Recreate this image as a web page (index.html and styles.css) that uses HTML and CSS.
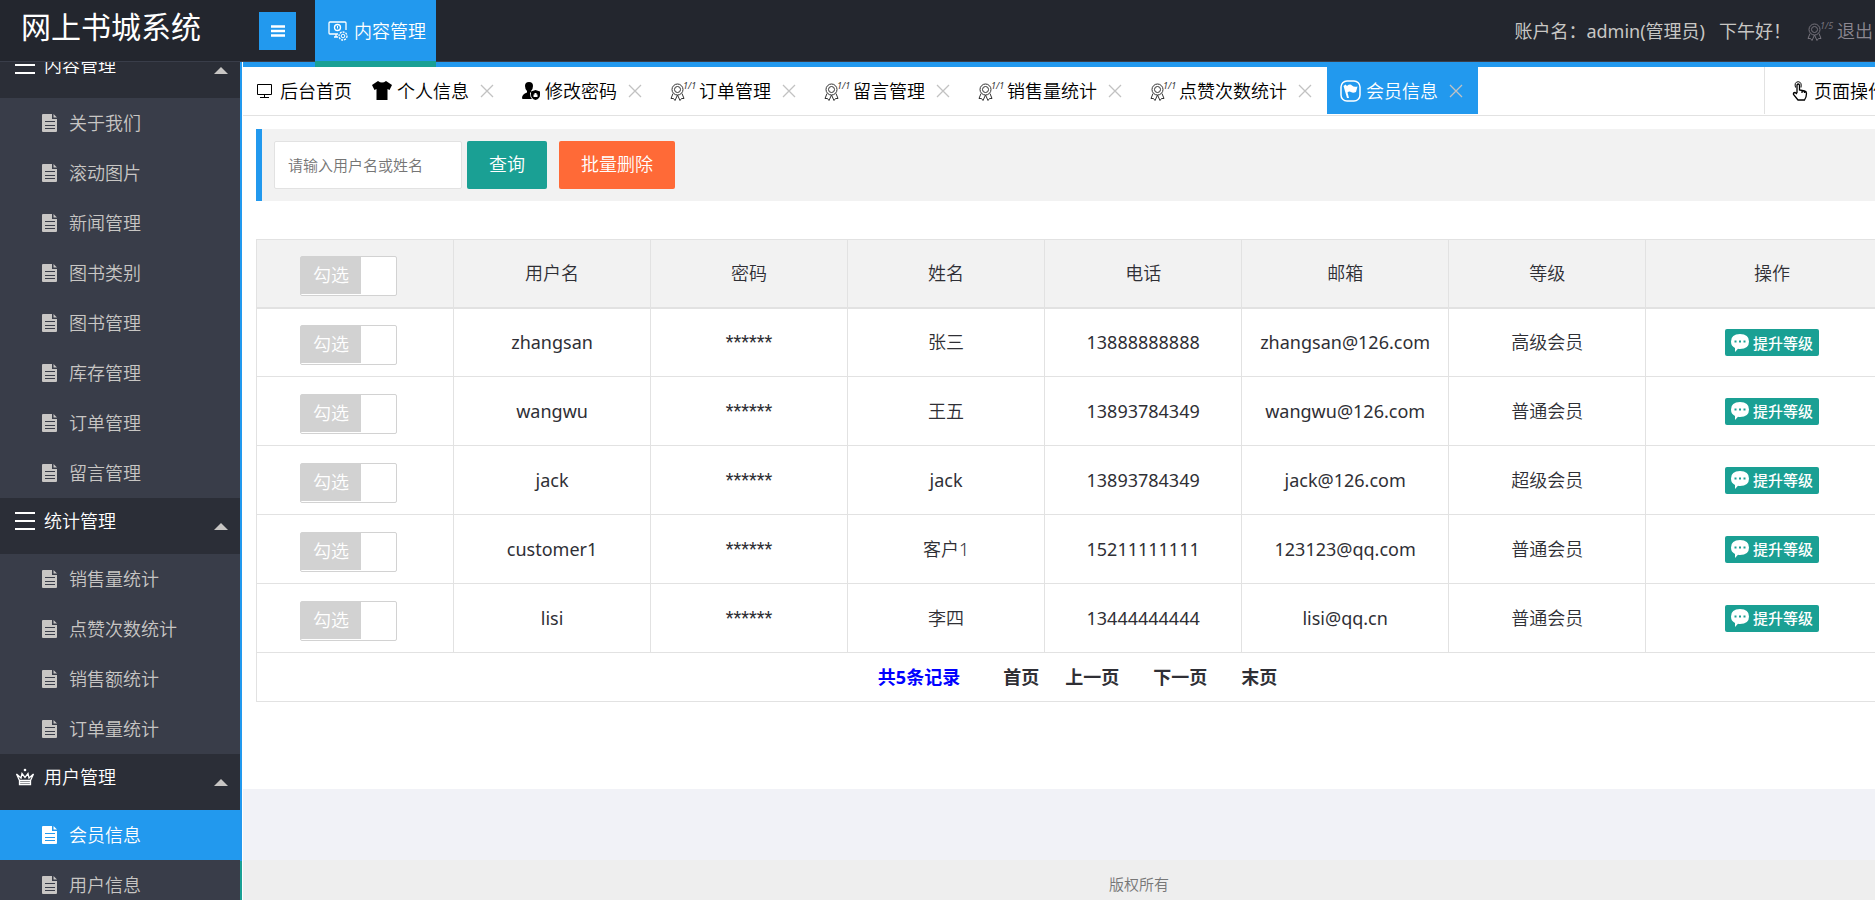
FILE: index.html
```html
<!DOCTYPE html>
<html lang="zh-CN">
<head>
    <meta charset="UTF-8">
    <meta name="viewport" content="width=device-width, initial-scale=1.0">
    <title>网上书城系统</title>
    <link rel="stylesheet" href="styles.css">
</head>
<body>
    <!-- SVG icon set -->
    <svg class="sprite" xmlns="http://www.w3.org/2000/svg">
        <symbol id="i-file" viewBox="0 0 16 18">
            <path fill="currentColor" fill-rule="evenodd" d="M1 0H10V5H15V17Q15 18 14 18H1Q0 18 0 17V1Q0 0 1 0ZM3 7V8H13V7ZM3 11V12H13V11ZM3 14V15H13V14Z" />
            <path fill="currentColor" d="M11.500 0L15 3.500H11.500Z" />
        </symbol>
        <symbol id="i-menu" viewBox="0 0 20 18">
            <path stroke="currentColor" stroke-width="2" d="M0 1H20M0 9H20M0 17H20" />
        </symbol>
        <symbol id="i-crown" viewBox="0 0 20 18">
            <path fill="none" stroke="currentColor" stroke-width="1.300" d="M4.500 12.500L1.500 6L6 10L7 5.500L10 9.500L13 5.500L14 10L18.500 6L15.500 12.500M4.500 12.500V16.500H15.500V12.500ZM4.500 14.500H15.500" />
            <circle fill="currentColor" cx="10" cy="2" r="1.300" />
        </symbol>
        <symbol id="i-bars" viewBox="0 0 14 12">
            <path stroke="currentColor" stroke-width="2.500" d="M0 1.500H14M0 6H14M0 10.500H14" />
        </symbol>
        <symbol id="i-board" viewBox="0 0 20 20">
            <path fill="none" stroke="currentColor" stroke-width="1.300" d="M10 13H2Q1 13 1 12V2Q1 1 2 1H17Q18 1 18 2V9M6 16H10M8 13V16" />
            <circle fill="none" stroke="currentColor" stroke-width="1.300" cx="9.500" cy="6.500" r="3" />
            <path stroke="currentColor" d="M9.500 5V7.500" />
            <circle fill="none" stroke="currentColor" stroke-width="1.300" stroke-dasharray="2 1" cx="15" cy="15" r="4" />
            <circle fill="none" stroke="currentColor" cx="15" cy="15" r="1.800" />
        </symbol>
        <symbol id="i-screen" viewBox="0 0 17 17">
            <path fill="none" stroke="currentColor" d="M1.500 2.500H15.500V12.500H1.500ZM8.500 12.500V15.500M4 15.500H13" />
        </symbol>
        <symbol id="i-shirt" viewBox="0 0 20 19">
            <path fill="currentColor" d="M6 0Q10 3 14 0L20 4L17.500 9L15.500 8V19H4.500V8L2.500 9L0 4Z" />
        </symbol>
        <symbol id="i-user" viewBox="0 0 18 18">
            <path fill="currentColor" d="M7 0Q11 0 11 4Q11 7 9 9V10L8 11Q8 15 10 17H1Q0 17 0 16Q0 12 5 10.500V9Q3 7 3 4Q3 0 7 0Z" />
            <path fill="currentColor" fill-rule="evenodd" d="M9 9.500L13.500 8L18 9.500V13Q18 16.500 13.500 18Q9 16.500 9 13ZM12.500 11H14.500V12.500H15.500V15H11.500V12.500H12.500Z" />
        </symbol>
        <symbol id="i-medal" viewBox="0 0 15 18">
            <g fill="none" stroke="currentColor">
                <circle cx="7.500" cy="6.500" r="5.500" />
                <circle cx="7.500" cy="6.500" r="3" />
                <path d="M3 10.500L1 15.500H3.500L5 17.500L7.500 12L10 17.500L11.500 15.500H14L12 10.500" />
            </g>
        </symbol>
        <symbol id="i-flag" viewBox="0 0 21 22">
            <rect fill="none" stroke="currentColor" stroke-width="1.500" x="1" y="1" width="19" height="20" rx="6" />
            <path fill="currentColor" d="M3.500 6L5.500 4.500L7 6Q10 3.500 12 5.500Q14 7.500 17.500 6.500L16 12Q13 13.500 11 12Q9 11 7.500 12.500L9 18H7Z" />
        </symbol>
        <symbol id="i-close" viewBox="0 0 14 14">
            <path stroke="currentColor" stroke-width="1.300" d="M1 1L13 13M13 1L1 13" />
        </symbol>
        <symbol id="i-hand" viewBox="0 0 16 20">
            <path fill="none" stroke="currentColor" stroke-width="1.300" d="M5 12V4.500Q5 3 6.200 3T7.500 4.500V9L12.500 10Q14.500 10.500 14.500 12.500Q14.500 16 12.500 19H6L1.500 13.500Q1 11.500 3 11.500L5 13M10 9.500V12M12.500 10V12" />
            <path fill="none" stroke="currentColor" d="M3.500 6.500Q2 1 6.200 .700Q10 1 9 6.500" />
        </symbol>
        <symbol id="i-chat" viewBox="0 0 18 18">
            <path fill="currentColor" fill-rule="evenodd" d="M9 0Q18 0 18 7.500T9 15Q8 15 7 14.800L4 18L4 14Q0 12 0 7.500Q0 0 9 0ZM3.500 6.500V8.500H5.500V6.500ZM8 6.500V8.500H10V6.500ZM12.500 6.500V8.500H14.500V6.500Z" />
        </symbol>
    </svg>

    <header class="header">
        <h1 class="logo">网上书城系统</h1>
        <button class="toggle-side" type="button" aria-label="菜单"><svg width="14" height="12"><use href="#i-bars" /></svg></button>
        <a class="top-nav" href="#"><svg width="20" height="20"><use href="#i-board" /></svg>内容管理</a>
        <div class="account">
            <span>账户名：admin(管理员)</span>
            <span>下午好！</span>
            <a class="logout" href="#"><span class="medal"><svg width="15" height="18"><use href="#i-medal" /></svg><i>1/5</i></span>退出</a>
        </div>
    </header>

    <div class="layout">
        <nav class="side">
            <div class="menu">
                <a class="group" href="#"><svg width="20" height="18"><use href="#i-menu" /></svg><span>内容管理</span></a>
                <a class="item" href="#"><svg width="16" height="18"><use href="#i-file" /></svg>关于我们</a>
                <a class="item" href="#"><svg width="16" height="18"><use href="#i-file" /></svg>滚动图片</a>
                <a class="item" href="#"><svg width="16" height="18"><use href="#i-file" /></svg>新闻管理</a>
                <a class="item" href="#"><svg width="16" height="18"><use href="#i-file" /></svg>图书类别</a>
                <a class="item" href="#"><svg width="16" height="18"><use href="#i-file" /></svg>图书管理</a>
                <a class="item" href="#"><svg width="16" height="18"><use href="#i-file" /></svg>库存管理</a>
                <a class="item" href="#"><svg width="16" height="18"><use href="#i-file" /></svg>订单管理</a>
                <a class="item" href="#"><svg width="16" height="18"><use href="#i-file" /></svg>留言管理</a>
                <a class="group" href="#"><svg width="20" height="18"><use href="#i-menu" /></svg><span>统计管理</span></a>
                <a class="item" href="#"><svg width="16" height="18"><use href="#i-file" /></svg>销售量统计</a>
                <a class="item" href="#"><svg width="16" height="18"><use href="#i-file" /></svg>点赞次数统计</a>
                <a class="item" href="#"><svg width="16" height="18"><use href="#i-file" /></svg>销售额统计</a>
                <a class="item" href="#"><svg width="16" height="18"><use href="#i-file" /></svg>订单量统计</a>
                <a class="group" href="#"><svg width="20" height="18"><use href="#i-crown" /></svg><span>用户管理</span></a>
                <a class="item active" href="#"><svg width="16" height="18"><use href="#i-file" /></svg>会员信息</a>
                <a class="item" href="#"><svg width="16" height="18"><use href="#i-file" /></svg>用户信息</a>
            </div>
        </nav>

        <main class="body">
            <div class="tabs">
                <a class="tab home" href="#"><svg width="17" height="17"><use href="#i-screen" /></svg>后台首页</a>
                <a class="tab" href="#"><svg width="20" height="19"><use href="#i-shirt" /></svg>个人信息<svg class="close" width="14" height="14"><use href="#i-close" /></svg></a>
                <a class="tab" href="#"><svg width="18" height="18"><use href="#i-user" /></svg>修改密码<svg class="close" width="14" height="14"><use href="#i-close" /></svg></a>
                <a class="tab" href="#"><span class="medal"><svg width="15" height="18"><use href="#i-medal" /></svg><i>1/1</i></span>订单管理<svg class="close" width="14" height="14"><use href="#i-close" /></svg></a>
                <a class="tab" href="#"><span class="medal"><svg width="15" height="18"><use href="#i-medal" /></svg><i>1/1</i></span>留言管理<svg class="close" width="14" height="14"><use href="#i-close" /></svg></a>
                <a class="tab" href="#"><span class="medal"><svg width="15" height="18"><use href="#i-medal" /></svg><i>1/1</i></span>销售量统计<svg class="close" width="14" height="14"><use href="#i-close" /></svg></a>
                <a class="tab" href="#"><span class="medal"><svg width="15" height="18"><use href="#i-medal" /></svg><i>1/1</i></span>点赞次数统计<svg class="close" width="14" height="14"><use href="#i-close" /></svg></a>
                <a class="tab current" href="#"><svg width="21" height="22"><use href="#i-flag" /></svg>会员信息<svg class="close" width="14" height="14"><use href="#i-close" /></svg></a>
                <a class="page-ops" href="#"><svg width="16" height="20"><use href="#i-hand" /></svg>页面操作</a>
            </div>

            <div class="page">
                <form class="search">
                    <input class="keyword" type="text" placeholder="请输入用户名或姓名" aria-label="用户名或姓名">
                    <button class="btn" type="button">查询</button>
                    <button class="btn danger" type="button">批量删除</button>
                </form>

                <table class="list">
                    <colgroup>
                        <col span="5" class="col"><col class="col-mail"><col class="col"><col>
                    </colgroup>
                    <thead>
                        <tr>
                            <th><label class="pick"><span>勾选</span><input type="checkbox"></label></th>
                            <th>用户名</th><th>密码</th><th>姓名</th><th>电话</th><th>邮箱</th><th>等级</th><th>操作</th>
                        </tr>
                    </thead>
                    <tbody>
                        <tr>
                            <td><label class="pick"><span>勾选</span><input type="checkbox"></label></td>
                            <td class="en">zhangsan</td><td class="pwd">******</td><td>张三</td><td class="en">13888888888</td><td class="en">zhangsan@126.com</td><td>高级会员</td>
                            <td><button class="upgrade" type="button"><svg width="18" height="18"><use href="#i-chat" /></svg>提升等级</button></td>
                        </tr>
                        <tr>
                            <td><label class="pick"><span>勾选</span><input type="checkbox"></label></td>
                            <td class="en">wangwu</td><td class="pwd">******</td><td>王五</td><td class="en">13893784349</td><td class="en">wangwu@126.com</td><td>普通会员</td>
                            <td><button class="upgrade" type="button"><svg width="18" height="18"><use href="#i-chat" /></svg>提升等级</button></td>
                        </tr>
                        <tr>
                            <td><label class="pick"><span>勾选</span><input type="checkbox"></label></td>
                            <td class="en">jack</td><td class="pwd">******</td><td class="en">jack</td><td class="en">13893784349</td><td class="en">jack@126.com</td><td>超级会员</td>
                            <td><button class="upgrade" type="button"><svg width="18" height="18"><use href="#i-chat" /></svg>提升等级</button></td>
                        </tr>
                        <tr>
                            <td><label class="pick"><span>勾选</span><input type="checkbox"></label></td>
                            <td class="en">customer1</td><td class="pwd">******</td><td>客户1</td><td class="en">15211111111</td><td class="en">123123@qq.com</td><td>普通会员</td>
                            <td><button class="upgrade" type="button"><svg width="18" height="18"><use href="#i-chat" /></svg>提升等级</button></td>
                        </tr>
                        <tr>
                            <td><label class="pick"><span>勾选</span><input type="checkbox"></label></td>
                            <td class="en">lisi</td><td class="pwd">******</td><td>李四</td><td class="en">13444444444</td><td class="en">lisi@qq.cn</td><td>普通会员</td>
                            <td><button class="upgrade" type="button"><svg width="18" height="18"><use href="#i-chat" /></svg>提升等级</button></td>
                        </tr>
                    </tbody>
                    <tfoot>
                        <tr>
                            <td colspan="8">
                                <div class="pager">
                                    <span class="total">共5条记录</span>
                                    <a href="#">首页</a>
                                    <a class="prev" href="#">上一页</a>
                                    <a href="#">下一页</a>
                                    <a href="#">末页</a>
                                </div>
                            </td>
                        </tr>
                    </tfoot>
                </table>
            </div>
            <footer class="footer">版权所有</footer>
        </main>
    </div>
</body>
</html>
```
FILE: styles.css
```css
* {
    box-sizing: border-box;
}

body {
    margin: 0;
    height: 100vh;
    display: flex;
    flex-direction: column;
    overflow: hidden;
    background: #fff;
    color: #2f2f35;
    font-family: "Noto Sans", "Noto Sans CJK SC", sans-serif;
    font-size: 18px;
    font-weight: 350;
    line-height: 24px;
}

a {
    color: inherit;
    text-decoration: none;
    white-space: nowrap;
}

svg {
    flex: none;
}

button,
input {
    font: inherit;
    margin: 0;
}

.sprite {
    position: absolute;
    width: 0;
    height: 0;
}

/* Header */
.header {
    position: relative;
    z-index: 2;
    flex: none;
    display: flex;
    align-items: center;
    height: 62px;
    background: #23262e;
    border-bottom: 1px solid #393d49;
    color: #c8c6c4;
}

.logo {
    flex: none;
    width: 259px;
    margin: 0;
    padding: 0 0 8px 21px;
    font-size: 30px;
    font-weight: 400;
    line-height: 48px;
    color: #fff;
}

.toggle-side {
    width: 37px;
    height: 38px;
    padding: 0;
    border: 0;
    background: #2299ee;
    color: #fff;
    display: flex;
    align-items: center;
    justify-content: center;
}

.top-nav {
    align-self: flex-start;
    display: flex;
    align-items: center;
    gap: 6px;
    height: 67px;
    margin-left: 19px;
    padding: 0 10px 0 13px;
    border-bottom: 6px solid #1aa094;
    background: #2299ee;
    color: #fff;
}

.account {
    display: flex;
    align-items: center;
    margin-left: auto;
    padding-right: 2px;
    font-weight: 400;
    white-space: nowrap;
}

.account span + span {
    margin-left: 14px;
}

.logout {
    display: flex;
    align-items: center;
    gap: 6px;
    margin-left: 16px;
    color: #8b8790;
    font-weight: 350;
}

/* medal icon with its small count */
.medal {
    display: flex;
    width: 24px;
    height: 20px;
    align-items: flex-end;
    opacity: .8;
}

.medal i {
    align-self: flex-start;
    font-size: 9px;
    font-weight: 400;
    line-height: 9px;
    margin-left: -2px;
}

.layout {
    flex: 1;
    min-height: 0;
    display: flex;
}

/* Side menu */
.side {
    flex: none;
    width: 242px;
    overflow: hidden;
    background: #393d49;
    border-right: 2px solid #2299ee;
    border-image: linear-gradient(#2299ee calc(100% - 40px), #1aa094 0) 1;
    color: #c8c6c4;
}

.menu {
    margin-top: -20px;
}

.group {
    display: flex;
    align-items: center;
    gap: 9px;
    height: 56px;
    padding: 0 12px 0 15px;
    background: #2b2e37;
    color: #fff;
}

.group svg,
.group span {
    margin-bottom: 10px;
}

.group::after {
    content: "";
    margin-left: auto;
    border: 7px solid transparent;
    border-top: 0;
    border-bottom-color: #c8c6c4;
}

.item {
    display: flex;
    align-items: center;
    gap: 11px;
    height: 50px;
    padding-left: 42px;
}

.item.active {
    background: #2299ee;
    color: #fff;
}

/* Content */
.body {
    flex: 1;
    min-width: 0;
    margin-left: 1px;
    display: flex;
    flex-direction: column;
    overflow: hidden;
    border-top: 5px solid #2299ee;
    background: #f1f2f7;
}

.tabs {
    flex: none;
    display: flex;
    height: 49px;
    padding-bottom: 1px;
    background: #fff;
    border-bottom: 1px solid #e2e2e2;
    color: #000;
}

.tab {
    display: flex;
    align-items: center;
    gap: 5px;
    padding: 0 15px 0 13px;
}

.tab.home {
    gap: 7px;
    padding-right: 7px;
}

.tab.current {
    background: #2299ee;
    color: #fff;
}

.close {
    margin-left: 6px;
    color: #c2c2c2;
}

.page-ops {
    flex: none;
    width: 111px;
    display: flex;
    align-items: center;
    gap: 6px;
    margin-left: auto;
    padding-left: 27px;
    border-left: 1px solid #e2e2e2;
}

.page {
    flex: none;
    min-width: 1669px;
    padding: 13px 13px 87px;
    background: #fff;
}

.search {
    display: flex;
    align-items: center;
    height: 72px;
    margin-bottom: 38px;
    padding-left: 12px;
    background: #f2f2f2;
    border-left: 6px solid #2299ee;
}

.keyword {
    width: 188px;
    height: 48px;
    padding: 0 13px;
    border: 1px solid #e2e2e2;
    border-radius: 2px;
    background: #fff;
    font-size: 15px;
}

.btn {
    height: 48px;
    margin-left: 5px;
    padding: 0 22px 2px;
    border: 0;
    border-radius: 2px;
    background: #1aa094;
    color: #fff;
}

.btn.danger {
    margin-left: 12px;
    background: #ff6a37;
}

.list {
    width: 100%;
    table-layout: fixed;
    border-collapse: collapse;
    text-align: center;
}

.col {
    width: 12%;
}

.col-mail {
    width: 207px;
}

.list th,
.list td {
    height: 69px;
    padding: 0;
    border: 1px solid #e2e2e2;
    font-weight: 350;
}

.list th {
    height: 68px;
    background: #f2f2f2;
    border-bottom-width: 2px;
}

.list .en {
    font-weight: 400;
}

.list .pwd {
    font-family: Roboto, sans-serif;
    font-weight: 400;
}

.list tfoot td {
    height: 49px;
}

.pick {
    display: flex;
    width: 97px;
    height: 40px;
    margin: 5px auto 0 43px;
    border: 1px solid #d2d2d2;
    border-radius: 2px;
    background: #fff;
}

.pick span {
    width: 60px;
    height: 37px;
    line-height: 36px;
    background: #d2d2d2;
    color: #fff;
}

.pick input {
    flex: 1;
    appearance: none;
}

.upgrade {
    display: inline-flex;
    align-items: center;
    gap: 4px;
    height: 27px;
    padding: 0 6px;
    border: 0;
    border-radius: 2px;
    background: #1aa094;
    color: #fff;
    font-size: 15px;
    font-weight: 500;
    vertical-align: middle;
}

.pager {
    display: flex;
    justify-content: center;
    font-weight: 700;
}

.pager a {
    margin-left: 34px;
}

.pager .prev {
    margin-left: 26px;
}

.total {
    margin-right: 9px;
    color: #0000ff;
}

.footer {
    min-width: 1792px;
    margin-top: auto;
    height: 40px;
    line-height: 48px;
    background: #eee;
    color: #777;
    font-size: 15px;
    text-align: center;
}
```
